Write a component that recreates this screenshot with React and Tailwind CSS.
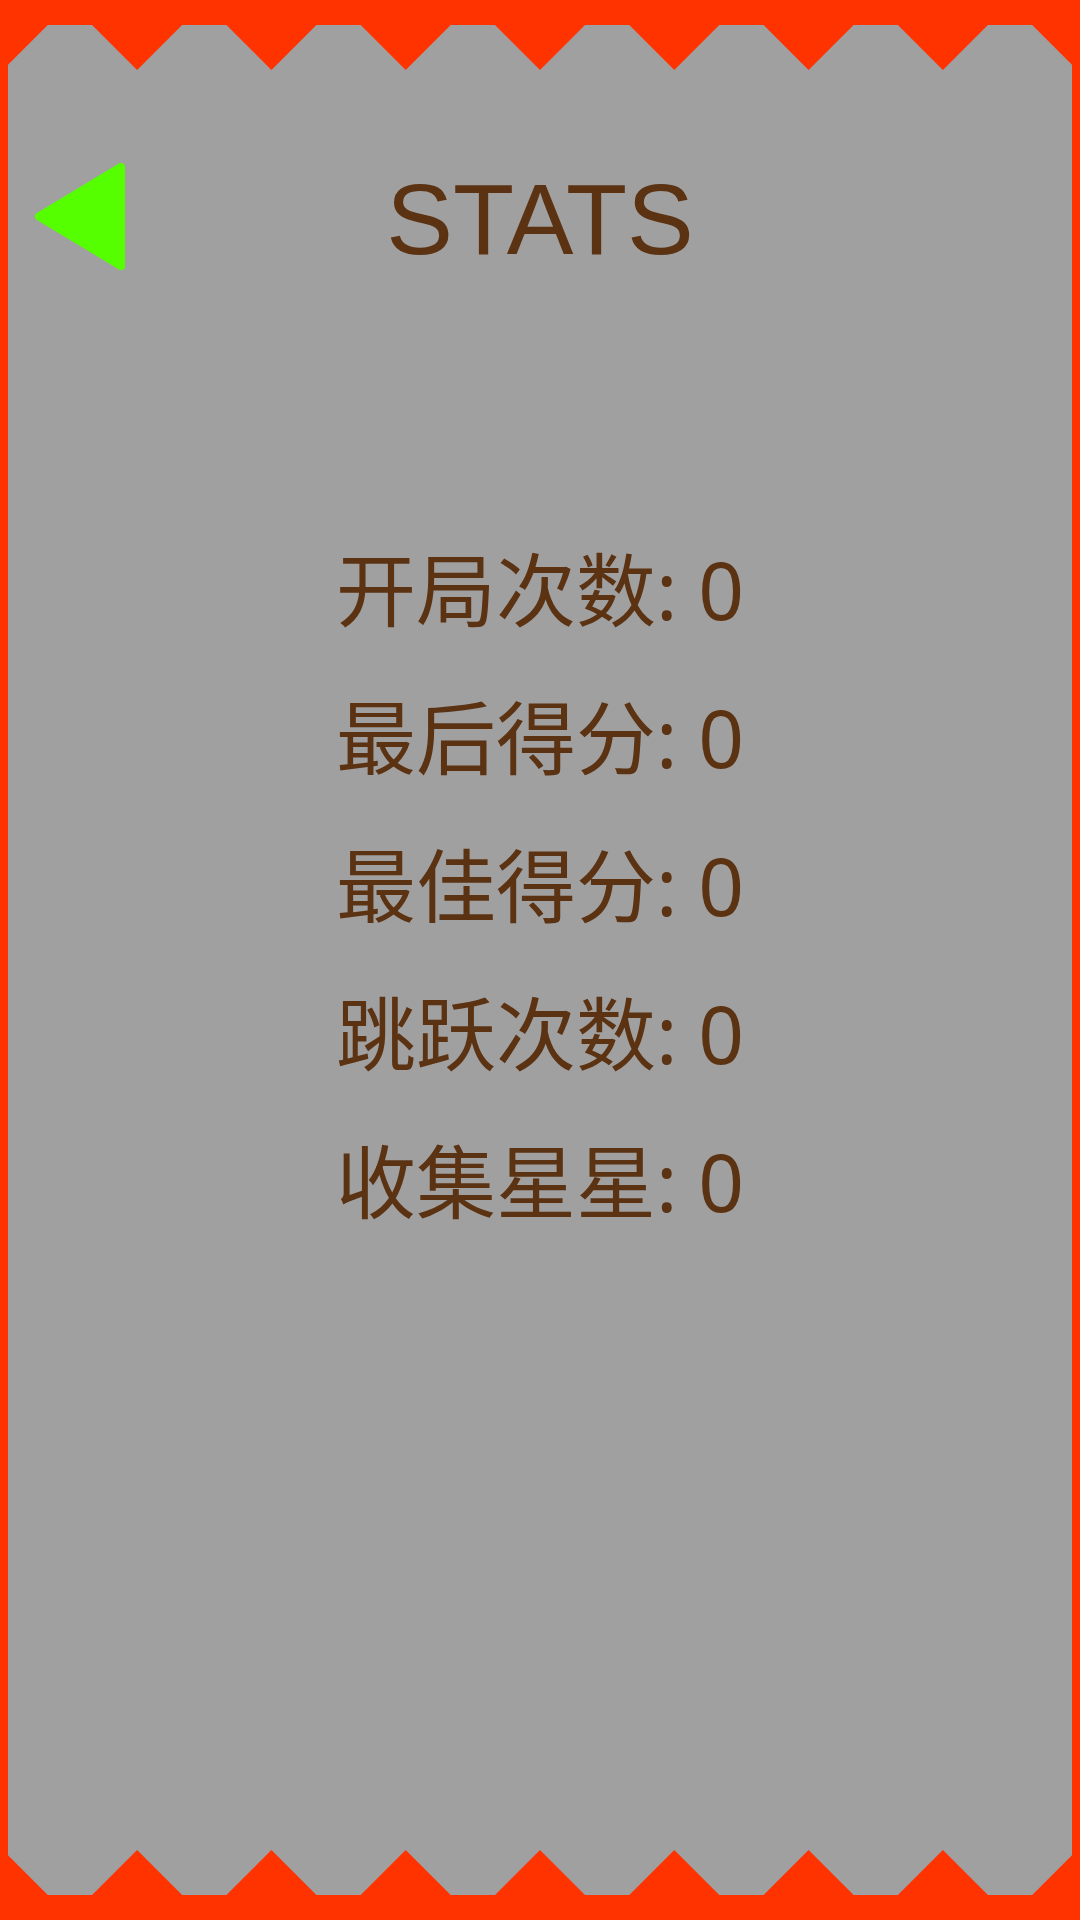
// Stats screen: zigzag red frame, back arrow, title and a list of counters

const STATS = [
  { label: '开局次数', value: 0 },
  { label: '最后得分', value: 0 },
  { label: '最佳得分', value: 0 },
  { label: '跳跃次数', value: 0 },
  { label: '收集星星', value: 0 },
];

// tips of the teeth, spread evenly round the centre line
const PERIOD = 134.3;
const tips = Array.from({ length: 9 }, (_, k) => 540 + PERIOD * (k - 4));

// gray edge under the teeth, clipped against the 8px side borders
const edgePoints = () => {
  const raw = [];
  tips.forEach((x) => {
    raw.push([x - 45, 25], [x, 70], [x + 45, 25]);
  });
  const inside = raw.filter(([x]) => x >= 8 && x <= 1072);
  const first = tips[0];
  const last = tips[tips.length - 1];
  const pts = [
    [8, 70],
    [8, 70 - (8 - first)],
    ...inside,
    [1072, 70 - (last - 1072)],
    [1072, 70],
  ];
  return pts.map(([x, y]) => `${x},${y}`).join(' ');
};

const ZigZag = ({ flip = false }) => (
  <svg
    width="1080"
    height="70"
    viewBox="0 0 1080 70"
    className={flip ? 'block -scale-y-100' : 'block'}
  >
    <rect x="0" y="0" width="1080" height="70" fill="#ff3300" />
    <polygon points={edgePoints()} fill="#a0a0a0" />
  </svg>
);

const BackArrow = () => (
  <svg width="90" height="107" viewBox="0 0 90 107" className="block">
    <polygon
      points="4,53.5 86,4 86,103"
      fill="#55ff00"
      stroke="#55ff00"
      strokeWidth="8"
      strokeLinejoin="round"
    />
  </svg>
);

export default function App() {
  return (
    <div className="w-[1080px] h-[1920px] bg-[#ff3300] flex flex-col overflow-hidden">
      <ZigZag />

      <div className="flex-1 mx-[8px] bg-[#a0a0a0] flex flex-col pt-[93px]">
        {/* Header */}
        <div className="grid grid-cols-[1fr_auto_1fr] items-center h-[107px]">
          <button type="button" className="ml-[27px] w-fit" aria-label="Back">
            <BackArrow />
          </button>
          <h1 className="mt-[5px] text-[100px] leading-none font-normal text-[#5b3212] font-['Liberation_Sans',Arial,sans-serif]">
            STATS
          </h1>
          <div />
        </div>

        {/* Counters */}
        <div className="mt-[245px] flex flex-col items-center font-['Noto_Sans','Noto_Sans_CJK_SC',sans-serif] text-[80px] leading-[148px] text-[#5b3212]">
          {STATS.map((s) => (
            <div key={s.label}>
              {s.label}: {s.value}
            </div>
          ))}
        </div>
      </div>

      <ZigZag flip />
    </div>
  );
}
